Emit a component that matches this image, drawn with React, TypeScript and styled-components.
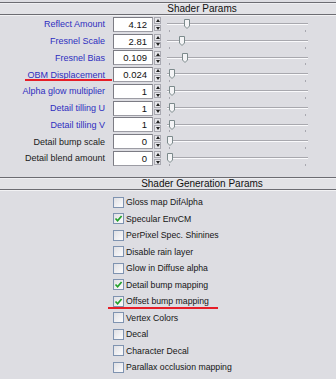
import React from "react";
import styled, { createGlobalStyle } from "styled-components";

const GlobalStyle = createGlobalStyle`
  html, body { margin: 0; padding: 0; background: #dddde2; }
  body { font-family: "Liberation Sans", Arial, sans-serif; }
`;

const Panel = styled.div`
  width: 336px;
  height: 379px;
  overflow: hidden;
  background: #dddde2;
  font-size: 9px;
  color: #000;
`;

const RolloutHeader = styled.div<{ $gap: number }>`
  margin-top: ${(p) => p.$gap}px;
  height: 11px;
  border-top: 1px solid #6c6c72;
  border-bottom: 1px solid #6c6c72;
  box-shadow: inset 0 1px 0 #efeff2, 0 1px 0 #f2f2f4;
  background: #e2e2e6;
  display: flex;
  align-items: center;
  justify-content: center;
  padding-left: 68px;
  font-size: 10px;
  line-height: 11px;
  color: #111;
`;

const ParamList = styled.div`
  padding-top: 1px;
  display: flex;
  flex-direction: column;
`;

const ParamRow = styled.div`
  position: relative;
  height: 16.75px;
  display: flex;
  align-items: center;
`;

const Label = styled.div<{ $blue: boolean }>`
  width: 105px;
  text-align: right;
  white-space: nowrap;
  color: ${(p) => (p.$blue ? "#2e2ec0" : "#1a1a1a")};
`;

const ValueBox = styled.div`
  margin-left: 8px;
  width: 40px;
  height: 15px;
  box-sizing: border-box;
  background: #fff;
  border: 1px solid #9c9ca4;
  border-top-color: #7c7c84;
  border-left-color: #7c7c84;
  display: flex;
  align-items: center;
  justify-content: flex-end;
  padding-right: 5px;
  font-size: 9.5px;
  color: #111;
`;

const Spinner = styled.div`
  margin-left: 1px;
  width: 7px;
  height: 14px;
  display: flex;
  flex-direction: column;
  gap: 1px;
`;

const SpinBtn = styled.div<{ $up: boolean }>`
  flex: 1;
  background: #e6e6ea;
  border: 1px solid #a8a8b0;
  box-sizing: border-box;
  display: flex;
  align-items: center;
  justify-content: center;
  &::after {
    content: "";
    width: 0;
    height: 0;
    border-left: 2px solid transparent;
    border-right: 2px solid transparent;
    ${(p) =>
      p.$up ? "border-bottom: 3px solid #222;" : "border-top: 3px solid #222;"}
  }
`;

const Slider = styled.div`
  position: relative;
  margin-left: 6px;
  width: 141px;
  height: 16.75px;
`;

const Track = styled.div`
  position: absolute;
  left: 0;
  right: 0;
  top: 7px;
  height: 1px;
  background: #a8a8ae;
  border-bottom: 1px solid #fafafc;
`;

const Tick = styled.div<{ $right: boolean }>`
  position: absolute;
  bottom: 1px;
  ${(p) => (p.$right ? "right: 2px;" : "left: 2px;")}
  width: 1px;
  height: 2px;
  background: #a8a8b0;
`;

const Thumb = styled.svg`
  position: absolute;
  top: 3px;
`;

const RedLine = styled.div<{ $left: number; $top: number; $width: number }>`
  position: absolute;
  left: ${(p) => p.$left}px;
  top: ${(p) => p.$top}px;
  width: ${(p) => p.$width}px;
  height: 2px;
  background-color: rgb(230, 30, 40);
`;

const CheckList = styled.div`
  padding-top: 4px;
  display: flex;
  flex-direction: column;
`;

const CheckRow = styled.div`
  position: relative;
  height: 16.5px;
  display: flex;
  align-items: center;
  padding-left: 113px;
`;

const Box = styled.div`
  width: 11px;
  height: 11px;
  box-sizing: border-box;
  border: 1px solid #7f93b0;
  background: linear-gradient(135deg, #e0e0e4 0%, #f6f6f8 80%);
  display: flex;
  align-items: center;
  justify-content: center;
`;

const CheckLabel = styled.span`
  margin-left: 2px;
  font-size: 8.7px;
  color: #151515;
  white-space: nowrap;
`;

type Param = { label: string; value: string; blue: boolean; thumb: number };

const params: Param[] = [
  { label: "Reflect Amount", value: "4.12", blue: true, thumb: 20 },
  { label: "Fresnel Scale", value: "2.81", blue: true, thumb: 15 },
  { label: "Fresnel Bias", value: "0.109", blue: true, thumb: 18 },
  { label: "OBM Displacement", value: "0.024", blue: true, thumb: 5 },
  { label: "Alpha glow multiplier", value: "1", blue: true, thumb: 5 },
  { label: "Detail tilling U", value: "1", blue: true, thumb: 5 },
  { label: "Detail tilling V", value: "1", blue: true, thumb: 5 },
  { label: "Detail bump scale", value: "0", blue: false, thumb: 3 },
  { label: "Detail blend amount", value: "0", blue: false, thumb: 3 },
];

const checks: { label: string; checked: boolean }[] = [
  { label: "Gloss map DifAlpha", checked: false },
  { label: "Specular EnvCM", checked: true },
  { label: "PerPixel Spec. Shinines", checked: false },
  { label: "Disable rain layer", checked: false },
  { label: "Glow in Diffuse alpha", checked: false },
  { label: "Detail bump mapping", checked: true },
  { label: "Offset bump mapping", checked: true },
  { label: "Vertex Colors", checked: false },
  { label: "Decal", checked: false },
  { label: "Character Decal", checked: false },
  { label: "Parallax occlusion mapping", checked: false },
];

export default function App() {
  return (
    <>
      <GlobalStyle />
      <Panel>
        <RolloutHeader $gap={2}>Shader Params</RolloutHeader>
        <ParamList>
          {params.map((p) => (
            <ParamRow key={p.label}>
              <Label $blue={p.blue}>{p.label}</Label>
              <ValueBox>{p.value}</ValueBox>
              <Spinner>
                <SpinBtn $up />
                <SpinBtn $up={false} />
              </Spinner>
              <Slider>
                <Track />
                <Tick $right={false} />
                <Tick $right />
                <Thumb
                  width="6"
                  height="10"
                  viewBox="0 0 6 10"
                  style={{ left: p.thumb - 3 }}
                >
                  <path
                    d="M0.5 0.5 H5.5 V7 L3 9.5 L0.5 7 Z"
                    fill="#f4f4f6"
                    stroke="#7c8a8c"
                    strokeWidth="1"
                  />
                </Thumb>
              </Slider>
              {p.label === "OBM Displacement" && (
                <RedLine $left={25} $top={13} $width={87} />
              )}
            </ParamRow>
          ))}
        </ParamList>
        <RolloutHeader $gap={10}>Shader Generation Params</RolloutHeader>
        <CheckList>
          {checks.map((c) => (
            <CheckRow key={c.label}>
              <Box>
                {c.checked && (
                  <svg width="9" height="9" viewBox="0 0 9 9">
                    <path
                      d="M1.5 4.5 L3.6 6.8 L7.6 2"
                      fill="none"
                      stroke="#22a02a"
                      strokeWidth="1.7"
                    />
                  </svg>
                )}
              </Box>
              <CheckLabel>{c.label}</CheckLabel>
              {c.label === "Offset bump mapping" && (
                <RedLine $left={108} $top={14} $width={110} />
              )}
            </CheckRow>
          ))}
        </CheckList>
      </Panel>
    </>
  );
}
